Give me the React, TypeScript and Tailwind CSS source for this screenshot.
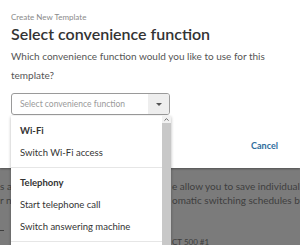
import { ChevronUp } from 'lucide-react';

const FONT = { fontFamily: '"Source Sans Pro", Lato, "Liberation Sans", sans-serif' };

const GROUPS = [
  { title: 'Wi-Fi', items: ['Switch Wi-Fi access'] },
  { title: 'Telephony', items: ['Start telephone call', 'Switch answering machine'] },
];

export default function App() {
  return (
    <div className="relative h-[245px] w-[300px] overflow-hidden bg-[#7b7b7b]" style={FONT}>
      {/* Dialog */}
      <div className="relative z-10 h-[168px] bg-white px-[11px] pt-[12px] shadow-[0_1px_2px_rgba(0,0,0,0.35)]">
        <p className="text-[8px] leading-[10px] text-[#8a8a8a]">Create New Template</p>
        <h1 className="mt-[2px] text-[16px] font-semibold leading-[20px] text-[#333]">Select convenience function</h1>
        <p className="mt-[3px] w-[270px] text-[10px] leading-[19px] text-[#555]">
          Which convenience function would you like to use for this template?
        </p>
        <div className="mt-[8px] flex h-[22px] w-[159px] items-stretch overflow-hidden rounded-[3px] border border-[#9a9a9a]">
          <div className="flex flex-1 items-center pl-[8px] text-[8.5px] text-[#9a9a9a]">Select convenience function</div>
          <div className="flex w-[21px] items-center justify-center bg-[#eeeeee]">
            <div className="h-0 w-0 border-x-[3px] border-t-[3px] border-x-transparent border-t-[#555]" />
          </div>
        </div>
        <div className="mt-[25px] flex justify-end pr-[11px]">
          <button type="button" className="text-[9px] font-bold leading-[12px] text-[#2e6d9c]">Cancel</button>
        </div>
      </div>

      {/* Page under the overlay */}
      <div className="pt-[12px] text-[10px] leading-[12px] text-[#3e3e3e]">
        <div className="flex whitespace-nowrap">
          <div className="w-[172px] shrink-0 overflow-hidden">
            <span className="inline-block w-[11px] overflow-hidden">s as</span>
          </div>
          <div className="overflow-hidden">e allow you to save individual settings</div>
        </div>
        <div className="flex whitespace-nowrap">
          <div className="w-[172px] shrink-0 overflow-hidden">
            <span className="inline-block w-[11px] overflow-hidden">r ne</span>
          </div>
          <div className="overflow-hidden">omatic switching schedules by clicking</div>
        </div>
        <div className="mt-[22px] ml-[-2px] h-px w-[6px] bg-[#3e3e3e]" />
        <div className="ml-[172px] mt-[6px] text-[8px] leading-[10px] text-[#3e3e3e]">CT 500 #1</div>
      </div>

      {/* Dropdown list */}
      <div className="absolute left-[11px] top-[116px] z-20 flex h-[140px] w-[160px] bg-white shadow-[0_1px_3px_rgba(0,0,0,0.3)]">
        <div className="flex-1 text-[9.5px] text-[#333]">
          {GROUPS.map((g) => (
            <div key={g.title} className="border-b border-[#e6e6e6] pb-[3px] pt-[4px]">
              <div className="flex h-[22px] items-center pl-[9px] font-bold">{g.title}</div>
              {g.items.map((it) => (
                <div key={it} className="flex h-[22px] items-center pl-[9px]">{it}</div>
              ))}
            </div>
          ))}
        </div>
        <div className="flex w-[9px] flex-col bg-[#f1f1f1]">
          <div className="flex h-[7px] items-center justify-center">
            <ChevronUp size={7} strokeWidth={3} className="text-[#555]" />
          </div>
          <div className="flex-1 bg-[#c8c8c8]" />
        </div>
      </div>
    </div>
  );
}
